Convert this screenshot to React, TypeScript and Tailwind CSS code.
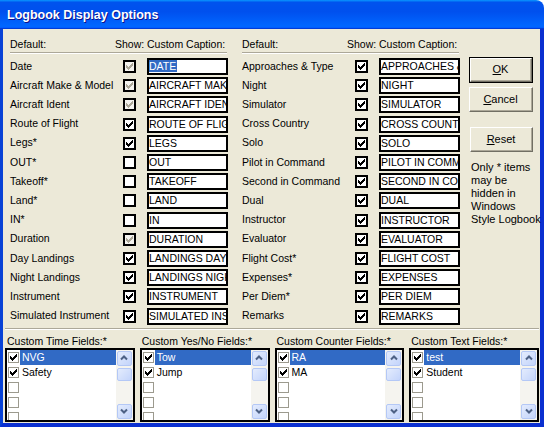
import React from "react";

type State = "on" | "off" | "dis";

const LEFT: [string, State, string][] = [
  ["Date", "dis", "DATE"],
  ["Aircraft Make & Model", "dis", "AIRCRAFT MAKE & MODEL"],
  ["Aircraft Ident", "dis", "AIRCRAFT IDENT"],
  ["Route of Flight", "on", "ROUTE OF FLIGHT"],
  ["Legs*", "on", "LEGS"],
  ["OUT*", "off", "OUT"],
  ["Takeoff*", "off", "TAKEOFF"],
  ["Land*", "off", "LAND"],
  ["IN*", "off", "IN"],
  ["Duration", "dis", "DURATION"],
  ["Day Landings", "on", "LANDINGS DAY"],
  ["Night Landings", "on", "LANDINGS NIGHT"],
  ["Instrument", "on", "INSTRUMENT"],
  ["Simulated Instrument", "on", "SIMULATED INSTRUMENT"],
];

const RIGHT: [string, State, string][] = [
  ["Approaches & Type", "on", "APPROACHES & TYPE"],
  ["Night", "on", "NIGHT"],
  ["Simulator", "on", "SIMULATOR"],
  ["Cross Country", "on", "CROSS COUNTRY"],
  ["Solo", "on", "SOLO"],
  ["Pilot in Command", "on", "PILOT IN COMMAND"],
  ["Second in Command", "on", "SECOND IN COMMAND"],
  ["Dual", "on", "DUAL"],
  ["Instructor", "on", "INSTRUCTOR"],
  ["Evaluator", "on", "EVALUATOR"],
  ["Flight Cost*", "on", "FLIGHT COST"],
  ["Expenses*", "on", "EXPENSES"],
  ["Per Diem*", "on", "PER DIEM"],
  ["Remarks", "on", "REMARKS"],
];

const LISTS: [string, string[]][] = [
  ["Custom Time Fields:*", ["NVG", "Safety"]],
  ["Custom Yes/No Fields:*", ["Tow", "Jump"]],
  ["Custom Counter Fields:*", ["RA", "MA"]],
  ["Custom Text Fields:*", ["test", "Student"]],
];

// classic 7x7 windows tick
function Tick({ color }: { color: string }) {
  const tops = [2, 3, 4, 3, 2, 1, 0];
  return (
    <svg width="7" height="7" viewBox="0 0 7 7" shapeRendering="crispEdges">
      {tops.map((t, i) => (
        <rect key={i} x={i} y={t} width="1" height="3" fill={color} />
      ))}
    </svg>
  );
}

function Check({ state }: { state: State }) {
  return (
    <div
      className={`flex h-[13px] w-[13px] shrink-0 items-center justify-center border-2 border-black ${
        state === "dis" ? "bg-[#f4f3ee]" : "bg-white"
      }`}
    >
      {state !== "off" && <Tick color={state === "dis" ? "#aca899" : "#000"} />}
    </div>
  );
}

function Group({ rows, first }: { rows: [string, State, string][]; first?: boolean }) {
  return (
    <div className="w-[218px]">
      <div className="flex h-[15px] items-center whitespace-nowrap">
        <div className="w-[105px]">Default:</div>
        <div className="w-[32px]">Show:</div>
        <div>Custom Caption:</div>
      </div>
      <div className="mr-[1px] h-[2px] border-t border-b border-t-[#aca899] border-b-white" />
      <div className="mt-[3px]">
        {rows.map(([label, state, caption], i) => (
          <div key={label} className="flex h-[19.2px] items-center">
            <div className="w-[113px] whitespace-nowrap">{label}</div>
            <Check state={state} />
            <div className="ml-[11px] h-[17px] w-[81px] overflow-hidden whitespace-nowrap border-2 border-black bg-white text-[10.5px] leading-[13px]">
              {first && i === 0 ? (
                <span className="bg-[#316ac5] pr-[1px] text-white">{caption}</span>
              ) : (
                caption
              )}
            </div>
          </div>
        ))}
      </div>
    </div>
  );
}

function Btn({ children, primary, h }: { children: React.ReactNode; primary?: boolean; h: string }) {
  const face = (
    <div className="flex h-full w-full items-center justify-center border border-t-white border-l-white border-r-[#716f64] border-b-[#716f64]">
      <div className="flex h-full w-full items-center justify-center border-r border-b border-r-[#aca899] border-b-[#aca899] text-[11px]">
        {children}
      </div>
    </div>
  );
  return primary ? (
    <div className={`${h} w-full border border-black`}>{face}</div>
  ) : (
    <div className={`${h} w-full`}>{face}</div>
  );
}

function Chevron({ down }: { down?: boolean }) {
  return (
    <svg width="8" height="6" viewBox="0 0 8 6">
      <polyline
        points={down ? "1,1.5 4,4.5 7,1.5" : "1,4.5 4,1.5 7,4.5"}
        fill="none"
        stroke="#4d6185"
        strokeWidth="2"
      />
    </svg>
  );
}

function ScrollPart({ children, className }: { children?: React.ReactNode; className: string }) {
  return (
    <div className={`${className} p-[1px]`}>
      <div className="flex h-full w-full items-center justify-center rounded-[2px] border border-[#b4c8f6] bg-[linear-gradient(135deg,#e4ecfd,#c3d4fb)]">
        {children}
      </div>
    </div>
  );
}

function ListBox({ title, items }: { title: string; items: string[] }) {
  const rows = [...items, "", "", ""];
  return (
    <div className="flex min-w-0 flex-col">
      <div className="h-[14px] pl-[2px] leading-[14px] whitespace-nowrap">{title}</div>
      <div className="flex h-[74px] border-2 border-black bg-white">
        <div className="flex-1 overflow-hidden">
          {rows.map((t, i) => (
            <div key={i} className="flex h-[15px] items-center">
              <div className="ml-[1px] flex h-[11px] w-[11px] shrink-0 items-center justify-center border border-[#9c9a8e] bg-white">
                {t && <Tick color="#000" />}
              </div>
              <div
                className={`ml-[1px] h-full flex-1 pl-[2px] leading-[15px] ${
                  i === 0 ? "bg-[#316ac5] text-white" : ""
                }`}
              >
                {t}
              </div>
            </div>
          ))}
        </div>
        <div className="flex w-[17px] flex-col bg-[#f5f4ef]">
          <ScrollPart className="h-[17px]">
            <Chevron />
          </ScrollPart>
          <ScrollPart className="h-[15px]" />
          <div className="flex-1" />
          <ScrollPart className="h-[17px]">
            <Chevron down />
          </ScrollPart>
        </div>
      </div>
    </div>
  );
}

export default function App() {
  return (
    <div className="flex h-[427px] w-[544px] flex-col bg-white font-['Liberation_Sans',Arial,sans-serif] text-[10.5px] text-black">
      <div className="flex h-[29px] items-center rounded-tr-[8px] bg-[linear-gradient(180deg,#0997ff,#0053ee_8%,#0050ee_40%,#06f_88%,#06f_93%,#005bff_95%,#003dd7_96%,#003dd7)] pl-[7px] pt-[1px] text-[12.5px] font-bold text-white [text-shadow:1px_1px_#0f1089]">
        Logbook Display Options
      </div>
      <div className="flex flex-1 flex-col border-l-[3px] border-r-[4px] border-b-[4px] border-l-[#0842d6] border-r-[#0a2fd0] border-b-[#0a2fd0] bg-[#ece9d8]">
        <div className="flex pl-[7px] pt-[8px]">
          <Group rows={LEFT} first />
          <div className="ml-[14px]">
            <Group rows={RIGHT} />
          </div>
          <div className="ml-[9px] flex w-[64px] flex-col pt-[20px]">
            <Btn primary h="h-[26px]">
              <span>
                <span className="underline">O</span>K
              </span>
            </Btn>
            <div className="mt-[4px]">
              <Btn h="h-[25px]">
                <span>
                  <span className="underline">C</span>ancel
                </span>
              </Btn>
            </div>
            <div className="mt-[15px] pl-[1px]">
              <Btn h="h-[25px]">
                <span>
                  <span className="underline">R</span>eset
                </span>
              </Btn>
            </div>
            <div className="mt-[9px] pl-[2px] text-[11px] leading-[13px] whitespace-nowrap">
              Only * items
              <br />
              may be
              <br />
              hidden in
              <br />
              Windows
              <br />
              Style Logbook
            </div>
          </div>
        </div>
        <div className="mt-[2px] ml-[2px] mr-[1px] h-[2px] border-t border-b border-t-[#aca899] border-b-white" />
        <div className="mt-[4px] grid grid-cols-4 gap-[5px] pl-[2px] pr-[1px]">
          {LISTS.map(([title, items]) => (
            <ListBox key={title} title={title} items={items} />
          ))}
        </div>
      </div>
    </div>
  );
}
